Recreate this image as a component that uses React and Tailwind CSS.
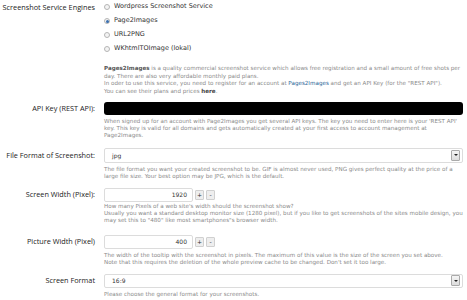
import React from 'react';

const font = { fontFamily: '"DejaVu Sans", Verdana, sans-serif' };
const labelFont = { fontFamily: '"Open Sans", "DejaVu Sans", sans-serif' };

const Row = ({ label, h = 'h-[14px]', children }) => (
  <div className="flex">
    <div
      className={`flex w-[96px] shrink-0 items-center justify-end whitespace-nowrap pr-[1px] text-[7.3px] text-[#222] ${h}`}
      style={labelFont}
    >
      {label}
    </div>
    <div className="ml-[8px] w-[359px]">{children}</div>
  </div>
);

const Desc = ({ children, mt = 'mt-[3px]' }) => (
  <p className={`${mt} text-[5.6px] leading-[7px] text-[#8a8a8a]`}>{children}</p>
);

const Radio = ({ checked, label }) => (
  <label className="flex h-[14px] items-center gap-[4px] text-[6.5px] text-[#333]">
    <span className="flex h-[6px] w-[6px] items-center justify-center rounded-full border border-[#b5b5b5] bg-[#f4f4f4]">
      {checked && <span className="h-[3px] w-[3px] rounded-full bg-[#3a6fb0]" />}
    </span>
    {label}
  </label>
);

const Select = ({ value }) => (
  <div className="flex h-[15px] items-center justify-between rounded-[2px] border border-[#dcdcdc] bg-white pl-[7px] pr-[2px] text-[6px] text-[#333]">
    <span>{value}</span>
    <span className="flex h-[11px] w-[9px] items-center justify-center rounded-[1px] border border-[#aaa] bg-gradient-to-b from-[#f5f5f5] to-[#dcdcdc]">
      <span className="h-0 w-0 border-x-[2px] border-t-[2px] border-x-transparent border-t-[#222]" />
    </span>
  </div>
);

const NumberInput = ({ value }) => (
  <div className="flex h-[14px] items-center gap-[2px]">
    <div className="flex h-[14px] w-[89px] items-center justify-end rounded-[2px] border border-[#dcdcdc] bg-white pr-[5px] text-[6px] text-[#333]">
      {value}
    </div>
    <button className="flex h-[10px] w-[9px] items-center justify-center rounded-[1px] border border-[#d0d0d0] bg-[#eeeeee] text-[6px] leading-none text-[#333]">+</button>
    <button className="flex h-[10px] w-[9px] items-center justify-center rounded-[1px] border border-[#d0d0d0] bg-[#eeeeee] text-[6px] leading-none text-[#333]">-</button>
  </div>
);

export default function App() {
  return (
    <div className="h-[300px] w-[467px] overflow-hidden bg-white" style={font}>
      <Row label="Screenshot Service Engines">
        <Radio label="Wordpress Screenshot Service" />
        <Radio checked label="Page2Images" />
        <Radio label="URL2PNG" />
        <Radio label="WKhtmlTOImage (lokal)" />
        <p className="mt-[9px] text-[5.6px] leading-[7.7px] text-[#8a8a8a]">
          <b className="text-[#555]">Pages2Images</b> is a quality commercial screenshot service which allows free registration and a small amount of free shots per day. There are also very affordable monthly paid plans.
          <br />
          In oder to use this service, you need to register for an account at <span className="text-[#2a6496]">Pages2Images</span> and get an API Key (for the "REST API").
          <br />
          You can see their plans and prices <b className="text-[#444]">here</b>.
        </p>
      </Row>

      <div className="mt-[6px]">
        <Row label="API Key (REST API):" h="h-[13px]">
          <div className="h-[13px] rounded-[3px] bg-black" />
          <Desc>
            When signed up for an account with Page2Images you get several API keys. The key you need to enter here is your 'REST API' key. This key is valid for all domains and gets automatically created at your first access to account management at Page2Images.
          </Desc>
        </Row>
      </div>

      <div className="mt-[9px]">
        <Row label="File Format of Screenshot:" h="h-[15px]">
          <Select value="jpg" />
          <Desc>
            The file format you want your created screenshot to be. GIF is almost never used, PNG gives perfect quality at the price of a large file size. Your best option may be JPG, which is the default.
          </Desc>
        </Row>
      </div>

      <div className="mt-[8px]">
        <Row label="Screen Width (Pixel):">
          <NumberInput value="1920" />
          <Desc mt="mt-[1px]">
            How many Pixels of a web site's width should the screenshot show?
            <br />
            Usually you want a standard desktop monitor size (1280 pixel), but if you like to get screenshots of the sites mobile design, you may set this to "480" like most smartphones"s browser width.
          </Desc>
        </Row>
      </div>

      <div className="mt-[11px]">
        <Row label="Picture Width (Pixel)">
          <NumberInput value="400" />
          <Desc>
            The width of the tooltip with the screenshot in pixels. The maximum of this value is the size of the screen you set above.
            <br />
            Note that this requires the deletion of the whole preview cache to be changed. Don't set it too large.
          </Desc>
        </Row>
      </div>

      <div className="mt-[8px]">
        <Row label="Screen Format">
          <div className="[&>div]:h-[14px]">
            <Select value="16:9" />
          </div>
          <Desc>Please choose the general format for your screenshots.</Desc>
        </Row>
      </div>
    </div>
  );
}
